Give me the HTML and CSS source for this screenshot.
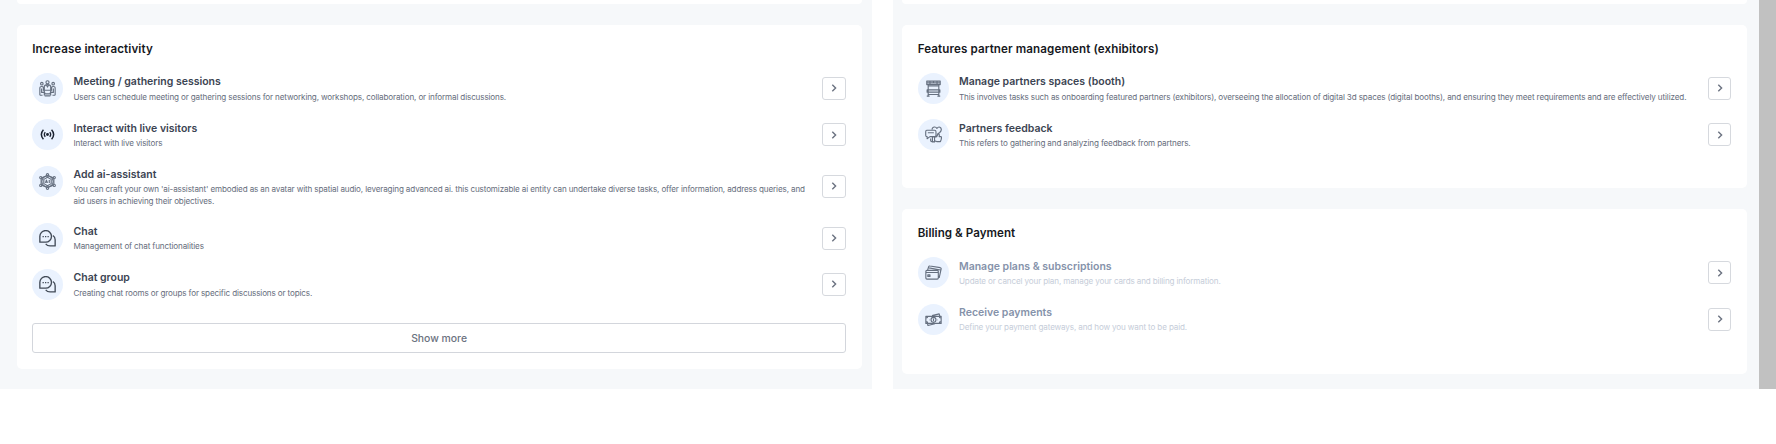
FILE: index.html
```html
<!DOCTYPE html>
<html lang="en">
<head>
<meta charset="utf-8">
<title>Event settings</title>
<link rel="stylesheet" href="styles.css">
</head>
<body>
<svg class="defs" width="0" height="0">
  <symbol id="chevron" viewBox="0 0 12 12"><path d="M4.3 2.8 7.6 6 4.3 9.2"/></symbol>
  <symbol id="meeting" viewBox="0 0 24 24"><circle cx="12" cy="3.200" r="2.200"/><circle cx="4" cy="5.200" r="1.800"/><circle cx="20" cy="5.200" r="1.800"/><path d="M7.500 14V9.500c0-2 1.500-3 4.500-3s4.500 1 4.500 3V14M10.500 7l1.500 3 1.500-3M1.200 21.500V11c0-2 5-3 5 0v4M22.800 21.500V11c0-2-5-3-5 0v4M3.700 12v5.500h3.800V22M20.300 12v5.500h-3.800V22M7 14.500h10l-1.500 5h-7zM8 22.500h8M1.200 21.500H5M19 21.500h3.800"/></symbol>
  <symbol id="live" viewBox="0 0 24 24"><path d="M5.500 4.500c-4 4.500-4 10.500 0 15M18.500 4.500c4 4.500 4 10.500 0 15M8.500 8.500c-2 2-2 5 0 7M15.500 8.500c2 2 2 5 0 7"/><circle cx="12" cy="12" r="1.200"/></symbol>
  <symbol id="ai" viewBox="0 0 24 24"><circle cx="12" cy="12" r="8"/><path d="M12 6 17.200 9v6L12 18l-5.200-3V9zM9 14l1.500-4 1.500 4M14.500 10v4M9.500 13h2M12 3.500 3 7M12 3.500 21 7M12 20.500 3 17M12 20.500l9-3.500M3 8v8M21 8v8"/><circle cx="12" cy="2.500" r="1.600"/><circle cx="2.500" cy="6.500" r="1.600"/><circle cx="21.500" cy="6.500" r="1.600"/><circle cx="2.500" cy="17.500" r="1.600"/><circle cx="21.500" cy="17.500" r="1.600"/><circle cx="12" cy="21.500" r="1.600"/></symbol>
  <symbol id="chat" viewBox="0 0 24 24"><path d="M1.200 17.200V9.200a8.200 8.200 0 1 1 8.200 8zM19.600 7.800c2 1.300 3.200 3.300 3.200 6v8.700h-7.200c-2.700 0-4.700-1-6.100-3"/><path d="M5 9.300h1.800M8.500 9.300h1.800M12 9.300h1.800"/></symbol>
  <symbol id="booth" viewBox="0 0 24 24"><path d="M2.500 1.500h19v5h-19zM2.500 4h19M4.500 6.500V23M19.500 6.500V23M4.500 8.500h15M3 14h18v3.200H3zM4.500 20.500h15M2.500 22.800h4M17.500 22.800h4M7 1.500v5M12 1.500v2.500M17 1.500v5"/></symbol>
  <symbol id="feedback" viewBox="0 0 24 24"><path d="M10 5c0-2 1.500-4 4-3.500 1.500.2 2.500 1.500 2.800 2C18 1.800 19.500 1 21 1.700c3 1.500 2.500 5-.2 7.500L17 12M2.500 6h11c1.500 0 2 .8 2 2v5c0 1-.5 2-2 2H7l-4 3v-3c-1.200 0-2-.8-2-2V8c0-1.200.5-2 1.500-2zM4 9.500h8.500M8 17.500v3c0 1 .7 1.500 1.500 1.500H12M13.500 16l3-1 2-4c1.800 0 2 1.500 1.500 4h2.300c1.500 0 1 2 .5 4l-1 3h-5.300l-3-1.200zM10.500 15.500h3v7h-3z"/></symbol>
  <symbol id="cards" viewBox="0 0 24 24"><path d="M1.200 10.500c0-1 .5-1.500 1.500-1.500h14.600c1 0 1.500.5 1.500 1.500v9.300c0 1-.5 1.500-1.500 1.500H2.700c-1 0-1.500-.5-1.500-1.500zM3.500 9 5.200 3.700c.3-.8 1-1 1.800-.8l14.500 2.300c.8.200 1.500.8 1.300 1.600L20 19.500M5.500 5.500l16.500 3M1.200 12h17.600M4 15.300h3v2.200H4z"/></symbol>
  <symbol id="cash" viewBox="0 0 24 24"><path d="M1.200 7.500h21.600v10H1.200zM4 7.500c0 1.500-1 2.500-2.800 2.500M20 7.500c0 1.500 1 2.500 2.800 2.500M4 17.500c0-1.500-1-2.500-2.800-2.500M20 17.500c0-1.500 1-2.500 2.800-2.500M10 6.500l10-2.500 1 3.500M3.500 17.500l.7 3L14 18"/><circle cx="12" cy="12.500" r="3.500"/><path d="M12 10.500v4M6 12.500h.5M17.500 12.500h.5"/></symbol>
</svg>
<main class="page">
  <section class="panel panel-left">
    <div class="card card-stub"></div>
    <div class="card card-interactivity">
      <h2 class="heading">Increase interactivity</h2>
      <ul class="list">
        <li class="row"><span class="badge"><svg class="icon"><use href="#meeting"/></svg></span><div class="text"><h3 class="title">Meeting / gathering sessions</h3><p class="desc">Users can schedule meeting or gathering sessions for networking, workshops, collaboration, or informal discussions.</p></div><button class="go"><svg class="chev"><use href="#chevron"/></svg></button></li>
        <li class="row"><span class="badge"><svg class="icon icon-bold"><use href="#live"/></svg></span><div class="text"><h3 class="title">Interact with live visitors</h3><p class="desc">Interact with live visitors</p></div><button class="go"><svg class="chev"><use href="#chevron"/></svg></button></li>
        <li class="row"><span class="badge"><svg class="icon"><use href="#ai"/></svg></span><div class="text"><h3 class="title">Add ai-assistant</h3><p class="desc">You can craft your own 'ai-assistant' embodied as an avatar with spatial audio, leveraging advanced ai. this customizable ai entity can undertake diverse tasks, offer information, address queries, and<br>aid users in achieving their objectives.</p></div><button class="go"><svg class="chev"><use href="#chevron"/></svg></button></li>
        <li class="row"><span class="badge"><svg class="icon icon-chat"><use href="#chat"/></svg></span><div class="text"><h3 class="title">Chat</h3><p class="desc">Management of chat functionalities</p></div><button class="go"><svg class="chev"><use href="#chevron"/></svg></button></li>
        <li class="row"><span class="badge"><svg class="icon icon-chat"><use href="#chat"/></svg></span><div class="text"><h3 class="title">Chat group</h3><p class="desc">Creating chat rooms or groups for specific discussions or topics.</p></div><button class="go"><svg class="chev"><use href="#chevron"/></svg></button></li>
      </ul>
      <button class="more">Show more</button>
    </div>
  </section>
  <section class="panel panel-right">
    <div class="card card-stub"></div>
    <div class="card card-partners">
      <h2 class="heading">Features partner management (exhibitors)</h2>
      <ul class="list">
        <li class="row"><span class="badge"><svg class="icon"><use href="#booth"/></svg></span><div class="text"><h3 class="title">Manage partners spaces (booth)</h3><p class="desc">This involves tasks such as onboarding featured partners (exhibitors), overseeing the allocation of digital 3d spaces (digital booths), and ensuring they meet requirements and are effectively utilized.</p></div><button class="go"><svg class="chev"><use href="#chevron"/></svg></button></li>
        <li class="row"><span class="badge"><svg class="icon"><use href="#feedback"/></svg></span><div class="text"><h3 class="title">Partners feedback</h3><p class="desc">This refers to gathering and analyzing feedback from partners.</p></div><button class="go"><svg class="chev"><use href="#chevron"/></svg></button></li>
      </ul>
    </div>
    <div class="card card-billing">
      <h2 class="heading">Billing &amp; Payment</h2>
      <ul class="list">
        <li class="row row-muted"><span class="badge"><svg class="icon"><use href="#cards"/></svg></span><div class="text"><h3 class="title">Manage plans &amp; subscriptions</h3><p class="desc">Update or cancel your plan, manage your cards and billing information.</p></div><button class="go"><svg class="chev"><use href="#chevron"/></svg></button></li>
        <li class="row row-muted"><span class="badge"><svg class="icon"><use href="#cash"/></svg></span><div class="text"><h3 class="title">Receive payments</h3><p class="desc">Define your payment gateways, and how you want to be paid.</p></div><button class="go"><svg class="chev"><use href="#chevron"/></svg></button></li>
      </ul>
    </div>
  </section>
  <div class="scrollbar"></div>
</main>
</body>
</html>
```
FILE: styles.css
```css
* { box-sizing: border-box; margin: 0; padding: 0; }
body { background: #fff; font-family: Inter, "Liberation Sans", sans-serif; overflow: hidden; }
.defs { display: block; }
.page { display: flex; height: 389px; }
.panel { display: flex; flex-direction: column; background: #f6f8fa; overflow: hidden; }
.panel-left { width: 872px; padding: 0 10.5px 0 16.7px; margin-right: 20.5px; }
.panel-right { width: 866.2px; padding: 0 12px 0 9.7px; }
.scrollbar { flex: 1; background: #c1c1c1; }
.card { background: #fff; border-radius: 5px; padding: 0 15.5px; flex: none; }
.card-stub { height: 4px; margin-bottom: 20.6px; border-radius: 0 0 5px 5px; }
.card-interactivity { height: 344px; }
.card-partners { height: 163.5px; margin-bottom: 20.7px; }
.card-billing { height: 165px; }
.heading { font-size: 11.6px; line-height: 16px; font-weight: 600; letter-spacing: 0.115px; color: #16181d; padding-top: 16.4px; white-space: nowrap; }
.card-billing .heading { letter-spacing: 0.04px; }
.list { list-style: none; display: flex; flex-direction: column; gap: 15.4px; padding-top: 16px; }
.row { display: flex; align-items: center; min-height: 31px; }
.badge { width: 31px; height: 31px; border-radius: 50%; background: #eaf2fe; display: flex; align-items: center; justify-content: center; flex: none; align-self: flex-start; }
.icon { width: 17px; height: 17px; fill: none; stroke: #667080; stroke-width: 1.6; stroke-linejoin: round; }
.icon-chat { stroke: #414a57; stroke-width: 1.9; }
.icon-bold { stroke: #1b2230; stroke-width: 2.3; width: 15px; height: 15px; }
.text { flex: 1; margin-left: 10.3px; min-width: 0; display: flex; flex-direction: column; gap: 2.2px; padding-top: 0.8px; white-space: nowrap; }
.title { font-size: 10.5px; line-height: 15.2px; font-weight: 600; letter-spacing: 0; color: #3b4452; }
.desc { font-size: 8.1px; line-height: 11.6px; font-weight: 400; letter-spacing: -0.135px; color: #666d7c; }
.go { width: 24px; height: 23px; border: 1px solid #d6d9de; border-radius: 3px; background: #fff; display: flex; align-items: center; justify-content: center; flex: none; }
.panel-right .go { width: 23px; }
.chev { width: 12px; height: 12px; fill: none; stroke: #6b7280; stroke-width: 1.4; }
.more { display: block; width: 100%; height: 30px; margin-top: 23.2px; padding-top: 1px; border: 1px solid #d3d6dc; border-radius: 3px; background: #fff; font: 500 10.4px Inter, sans-serif; color: #6b7280; }
.row-muted .title { color: #8592aa; }
.row-muted .desc { color: #c6cdd9; }
```
